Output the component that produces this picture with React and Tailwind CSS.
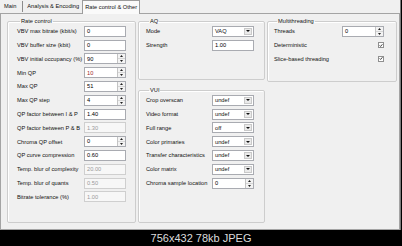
import React from 'react';

const rateRows = [
  { label: 'VBV max bitrate (kbit/s)', value: '0' },
  { label: 'VBV buffer size (kbit)', value: '0' },
  { label: 'VBV initial occupancy (%)', value: '90', spin: true },
  { label: 'Min QP', value: '10', spin: true, red: true },
  { label: 'Max QP', value: '51', spin: true },
  { label: 'Max QP step', value: '4', spin: true },
  { label: 'QP factor between I & P', value: '1.40' },
  { label: 'QP factor between P & B', value: '1.30', disabled: true },
  { label: 'Chroma QP offset', value: '0', spin: true },
  { label: 'QP curve compression', value: '0.60' },
  { label: 'Temp. blur of complexity', value: '20.00', disabled: true },
  { label: 'Temp. blur of quants', value: '0.50', disabled: true },
  { label: 'Bitrate tolerance (%)', value: '1.00', disabled: true },
];

const vuiRows = [
  { label: 'Crop overscan', value: 'undef' },
  { label: 'Video format', value: 'undef' },
  { label: 'Full range', value: 'off' },
  { label: 'Color primaries', value: 'undef' },
  { label: 'Transfer characteristics', value: 'undef' },
  { label: 'Color matrix', value: 'undef' },
];

const Spinner = () => (
  <div className="w-[8px] h-full border-l border-[#c4c4c4] bg-[#f3f3f3] flex flex-col">
    <div className="flex-1 flex items-center justify-center border-b border-[#d6d6d6]">
      <svg width="3" height="2" viewBox="0 0 3 2"><path d="M0 2 L1.5 0 L3 2 Z" fill="#222" /></svg>
    </div>
    <div className="flex-1 flex items-center justify-center">
      <svg width="3" height="2" viewBox="0 0 3 2"><path d="M0 0 L1.5 2 L3 0 Z" fill="#222" /></svg>
    </div>
  </div>
);

const TextBox = ({ value, spin, disabled, red }) => (
  <div
    className={`w-[42px] h-[11px] border flex items-stretch ${
      disabled ? 'border-[#cfcfcf] bg-[#f7f7f7]' : 'border-[#a9abb1] bg-white'
    }`}
  >
    <div
      className={`flex-1 pl-[2px] flex items-center ${
        disabled ? 'text-[#9a9a9a]' : red ? 'text-[#a02828]' : 'text-black'
      }`}
    >
      {value}
    </div>
    {spin && <Spinner />}
  </div>
);

const Combo = ({ value }) => (
  <div className="w-[42px] h-[11px] border border-[#a9abb1] bg-white flex items-stretch">
    <div className="flex-1 pl-[2px] flex items-center">{value}</div>
    <div className="w-[8px] m-[1px] bg-[#eaeaea] border border-[#c9c9c9] flex items-center justify-center">
      <svg width="4" height="2" viewBox="0 0 4 2"><path d="M0 0 L2 2 L4 0 Z" fill="#111" /></svg>
    </div>
  </div>
);

const Check = () => (
  <div className="w-[6px] h-[6px] border border-[#8f8f8f] bg-white flex items-center justify-center">
    <svg width="5" height="5" viewBox="0 0 5 5">
      <path d="M0.8 2.4 L2 3.7 L4.3 0.9" stroke="#1a1a1a" strokeWidth="1" fill="none" />
    </svg>
  </div>
);

const Group = ({ title, className, children }) => (
  <fieldset className={`min-w-0 border border-[#cdcdcd] rounded-[2px] shadow-[inset_1px_1px_0_#ffffff] ${className}`}>
    <legend className="ml-[3px] px-[1px] leading-[7px]">{title}</legend>
    {children}
  </fieldset>
);

const Row = ({ label, children }) => (
  <div className="h-[13.8px] flex items-center justify-between">
    <span>{label}</span>
    {children}
  </div>
);

export default function App() {
  return (
    <div className="w-[402px] h-[246px] bg-black flex flex-col font-['Liberation_Sans',Arial,sans-serif] text-[5.7px] text-[#111]">
      <div className="h-[230px] w-[401px] bg-[#f0f0f0] border-r border-[#7a7a7a] flex flex-col">
        {/* Tabs */}
        <div className="h-[13px] flex items-stretch">
          <div className="pl-[4px] pr-[6px] flex items-center">Main</div>
          <div className="w-px my-[1px] bg-[#8c8c8c]" />
          <div className="pl-[4px] pr-[3px] flex items-center">Analysis &amp; Encoding</div>
          <div className="px-[2px] flex items-center bg-[#fafafa] border-l border-r border-t border-[#9c9c9c] mb-[-1px] z-10">
            Rate control &amp; Other
          </div>
        </div>

        {/* Panel */}
        <div className="flex-1 border border-[#a4a4a4] bg-[#f0f0f0] flex gap-[2px] pl-[6px] pt-[3.5px] pb-[6px]">
          <Group title="Rate control" className="w-[129px] pl-[9px] pr-[9px]">
            {rateRows.map((r) => (
              <Row key={r.label} label={r.label}>
                <TextBox value={r.value} spin={r.spin} disabled={r.disabled} red={r.red} />
              </Row>
            ))}
          </Group>

          <div className="w-[127px] flex flex-col gap-[7px]">
            <Group title="AQ" className="h-[62px] pl-[7px] pr-[10px]">
              <Row label="Mode">
                <Combo value="VAQ" />
              </Row>
              <Row label="Strength">
                <TextBox value="1.00" />
              </Row>
            </Group>
            <Group title="VUI" className="flex-1 pl-[7px] pr-[10px]">
              {vuiRows.map((r) => (
                <Row key={r.label} label={r.label}>
                  <Combo value={r.value} />
                </Row>
              ))}
              <Row label="Chroma sample location">
                <TextBox value="0" spin />
              </Row>
            </Group>
          </div>

          <div className="w-[130px] flex flex-col">
            <Group title="Multithreading" className="h-[64px] pl-[6px] pr-[12px]">
              <Row label="Threads">
                <TextBox value="0" spin />
              </Row>
              <Row label="Deterministic">
                <Check />
              </Row>
              <Row label="Slice-based threading">
                <Check />
              </Row>
            </Group>
          </div>
        </div>
      </div>
      <div className="flex-1 flex items-center justify-center text-[11px] text-[#dcdcdc] font-['Liberation_Sans',Arial,sans-serif]">
        756x432 78kb JPEG
      </div>
    </div>
  );
}
